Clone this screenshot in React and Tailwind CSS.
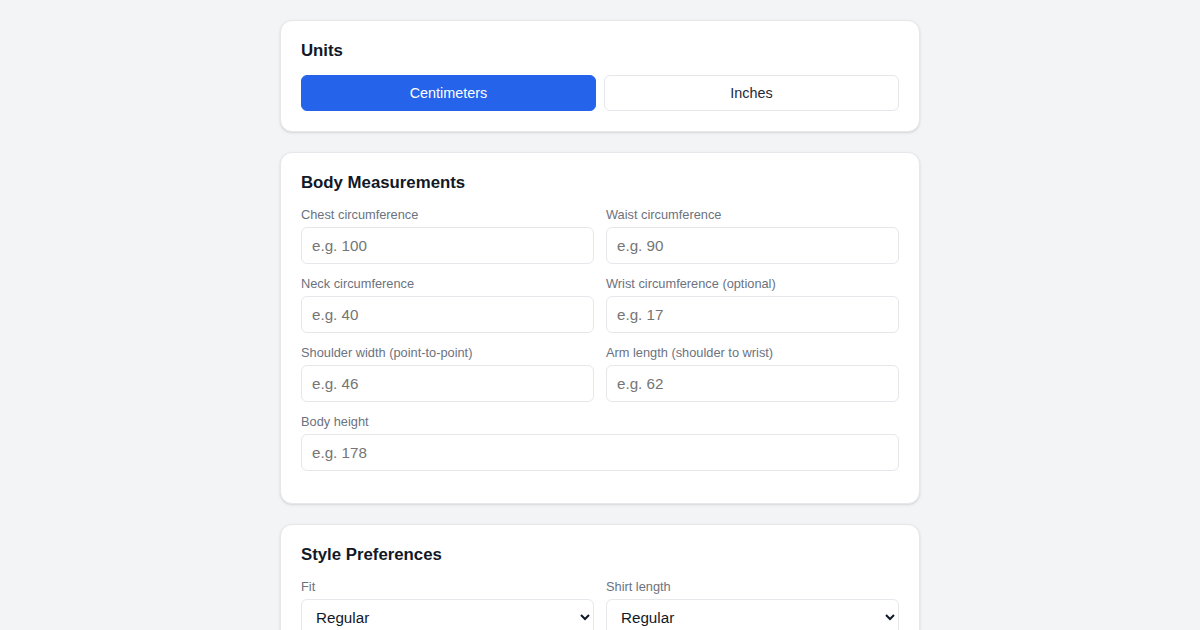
import React, { useState } from 'react';

const fields = [
  { id: 'chest', label: 'Chest circumference', placeholder: 'e.g. 100' },
  { id: 'waist', label: 'Waist circumference', placeholder: 'e.g. 90' },
  { id: 'neck', label: 'Neck circumference', placeholder: 'e.g. 40' },
  { id: 'wrist', label: 'Wrist circumference (optional)', placeholder: 'e.g. 17' },
  { id: 'shoulder', label: 'Shoulder width (point-to-point)', placeholder: 'e.g. 46' },
  { id: 'arm', label: 'Arm length (shoulder to wrist)', placeholder: 'e.g. 62' },
];

const Card = ({ title, children }) => (
  <section className="bg-white border border-[#e5e7eb] rounded-xl shadow-sm p-5">
    <h2 className="text-[16.8px] leading-[19px] font-bold text-[#111827] mb-[15px]">{title}</h2>
    {children}
  </section>
);

const Field = ({ label, children, full }) => (
  <div className={`flex flex-col mb-3 ${full ? 'col-span-2' : ''}`}>
    <label className="text-[12.8px] leading-4 text-[#6b7280] mb-1">{label}</label>
    {children}
  </div>
);

const inputCls =
  'h-[37px] w-full border border-[#e5e7eb] rounded-md px-[10px] text-[15.2px] text-[#111827] bg-white placeholder:text-[#757575] outline-none';

const selectCls =
  'h-[37px] w-full border border-[#e5e7eb] rounded-md px-[10px] text-[15.2px] text-[#111827] bg-white outline-none';

export default function App() {
  const [unit, setUnit] = useState('cm');

  const btn = (active) =>
    `h-9 rounded-md text-[14.4px] leading-[34px] border ${
      active ? 'bg-[#2563eb] border-[#2563eb] text-white' : 'bg-white border-[#e5e7eb] text-[#1f2937]'
    }`;

  return (
    <div className="min-h-screen bg-[#f3f4f6] pt-5 pb-10 font-['Liberation_Sans',Arial,sans-serif]">
      <div className="w-[640px] mx-auto flex flex-col gap-5">
        <Card title="Units">
          <div className="grid grid-cols-2 gap-2">
            <button onClick={() => setUnit('cm')} className={btn(unit === 'cm')}>
              Centimeters
            </button>
            <button onClick={() => setUnit('in')} className={btn(unit === 'in')}>
              Inches
            </button>
          </div>
        </Card>

        <Card title="Body Measurements">
          <div className="grid grid-cols-2 gap-x-3">
            {fields.map((f) => (
              <Field key={f.id} label={f.label}>
                <input type="text" placeholder={f.placeholder} className={inputCls} />
              </Field>
            ))}
            <Field label="Body height" full>
              <input type="text" placeholder="e.g. 178" className={inputCls} />
            </Field>
          </div>
        </Card>

        <Card title="Style Preferences">
          <div className="grid grid-cols-2 gap-x-3">
            <Field label="Fit">
              <select defaultValue="regular" className={selectCls}>
                <option value="slim">Slim</option>
                <option value="regular">Regular</option>
                <option value="relaxed">Relaxed</option>
              </select>
            </Field>
            <Field label="Shirt length">
              <select defaultValue="regular" className={selectCls}>
                <option value="short">Short</option>
                <option value="regular">Regular</option>
                <option value="long">Long</option>
              </select>
            </Field>
          </div>
        </Card>
      </div>
    </div>
  );
}
